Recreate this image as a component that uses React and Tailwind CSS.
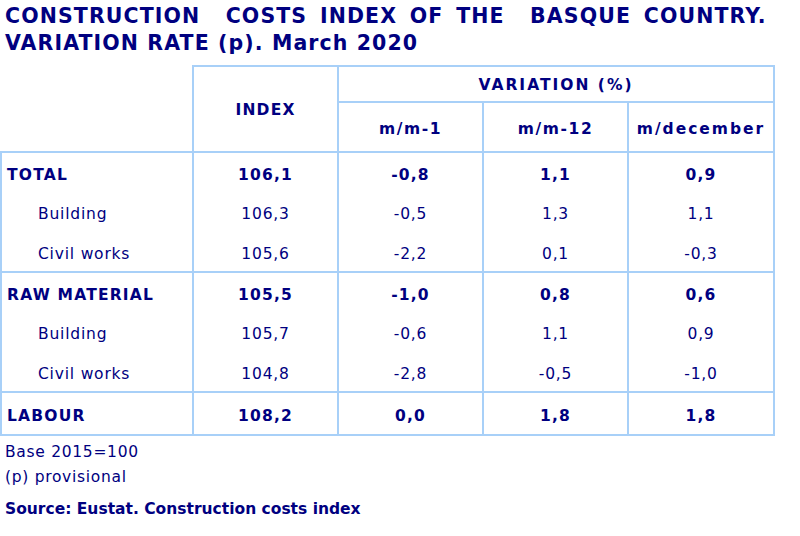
import React from "react";

const B = "border-[#a8d0f8]";

const groups = [
  {
    head: ["TOTAL", "106,1", "-0,8", "1,1", "0,9"],
    rows: [
      ["Building", "106,3", "-0,5", "1,3", "1,1"],
      ["Civil works", "105,6", "-2,2", "0,1", "-0,3"],
    ],
  },
  {
    head: ["RAW MATERIAL", "105,5", "-1,0", "0,8", "0,6"],
    rows: [
      ["Building", "105,7", "-0,6", "1,1", "0,9"],
      ["Civil works", "104,8", "-2,8", "-0,5", "-1,0"],
    ],
  },
  {
    head: ["LABOUR", "108,2", "0,0", "1,8", "1,8"],
    rows: [],
    last: true,
  },
];

export default function App() {
  return (
    <div
      className="w-[800px] h-[536px] bg-white text-[#000080] overflow-hidden"
      style={{ fontFamily: '"DejaVu Sans", Verdana, sans-serif' }}
    >
      <div className="pl-[5px] pt-[3px] text-[20.5px] font-bold leading-[27px] whitespace-pre tracking-[1.1px]">
        <div className="[word-spacing:4.5px]">{"CONSTRUCTION  COSTS INDEX OF THE  BASQUE COUNTRY."}</div>
        <div>VARIATION RATE (p). March 2020</div>
      </div>
      <table className="mt-[8px] border-collapse table-fixed w-[773px] text-[15.5px]">
        <colgroup>
          <col className="w-[192px]" />
          <col className="w-[145px]" />
          <col className="w-[145px]" />
          <col className="w-[145px]" />
          <col className="w-[146px]" />
        </colgroup>
        <thead className="tracking-[1.6px]">
          <tr className="h-[36px]">
            <th rowSpan={2} className={`border-0 border-b-2 ${B}`}></th>
            <th rowSpan={2} className={`border-2 ${B} font-bold text-center align-middle pt-[4px] tracking-[1.2px]`}>
              INDEX
            </th>
            <th colSpan={3} className={`border-2 ${B} font-bold text-center pt-[3px] tracking-[2px]`}>
              VARIATION (%)
            </th>
          </tr>
          <tr className="h-[50px]">
            <th className={`border-2 ${B} font-bold pt-[5px]`}>m/m-1</th>
            <th className={`border-2 ${B} font-bold pt-[5px]`}>m/m-12</th>
            <th className={`border-2 ${B} font-bold pt-[5px] tracking-[2px]`}>m/december</th>
          </tr>
        </thead>
        {groups.map((g, gi) => (
          <tbody key={gi} className={`border-2 ${B}`}>
            <tr className={`${g.last ? "h-[43px]" : "h-[40px]"} font-bold tracking-[1.2px]`}>
              <td className={`border-x-2 ${B} pl-[5px] pt-[6px]`}>{g.head[0]}</td>
              {g.head.slice(1).map((v, i) => (
                <td key={i} className={`border-x-2 ${B} text-center pt-[6px]`}>
                  {v}
                </td>
              ))}
            </tr>
            {g.rows.map((r, ri) => (
              <tr key={ri} className="h-[40px] tracking-[0.8px]">
                <td className={`border-x-2 ${B} pl-[36px] pt-[6px]`}>{r[0]}</td>
                {r.slice(1).map((v, i) => (
                  <td key={i} className={`border-x-2 ${B} text-center pt-[6px]`}>
                    {v}
                  </td>
                ))}
              </tr>
            ))}
          </tbody>
        ))}
      </table>
      <div className="pl-[5px] pt-[4px] text-[15.5px] leading-[25px]">
        <div className="tracking-[0.7px]">Base 2015=100</div>
        <div className="tracking-[0.7px]">(p) provisional</div>
        <div className="font-bold mt-[7px]">Source: Eustat. Construction costs index</div>
      </div>
    </div>
  );
}
